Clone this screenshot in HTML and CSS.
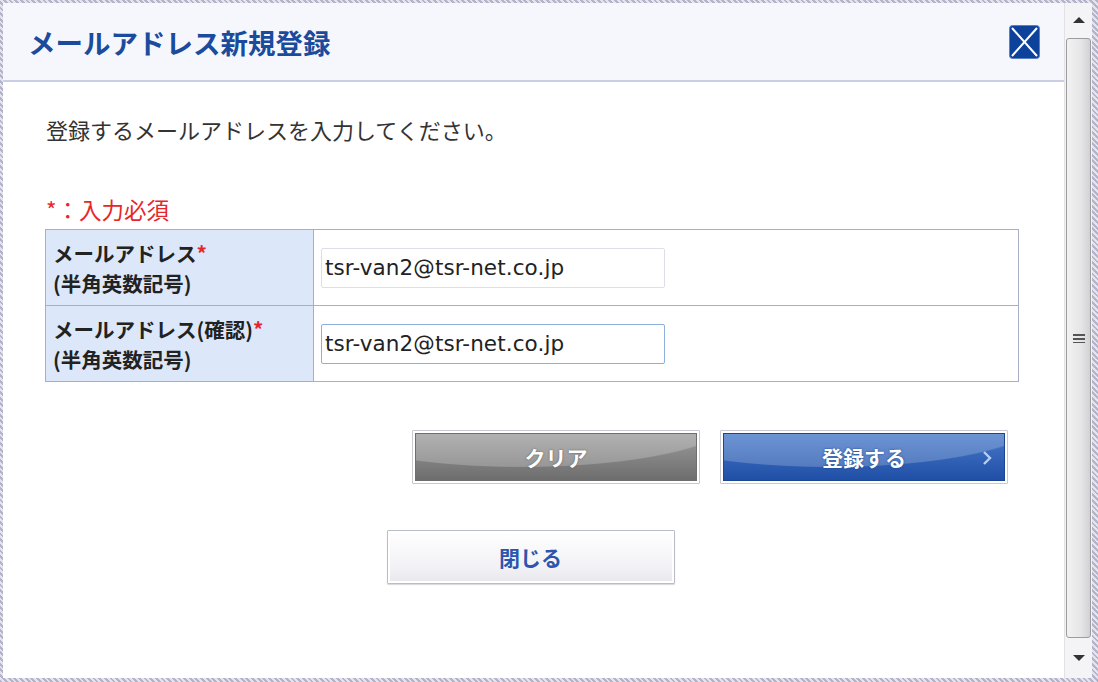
FILE: index.html
```html
<!DOCTYPE html>
<html>
<head>
    <title>メールアドレス新規登録</title>
    <link rel="stylesheet" href="styles.css">
</head>
<body>
    <div class="frame">
        <div class="window">
            <div class="main">
                <div class="header">
                    <h1 class="title">メールアドレス新規登録</h1>
                    <a class="close-x" href="#">
                        <svg width="31" height="34" viewBox="0 0 31 34">
                            <rect x="0.5" y="0.5" width="30" height="33" rx="3" fill="#0d429c" stroke="#5b7fc4"/>
                            <line x1="3" y1="3" x2="28" y2="31" stroke="#ffffff" stroke-width="2"/>
                            <line x1="28" y1="3" x2="3" y2="31" stroke="#ffffff" stroke-width="2"/>
                        </svg>
                    </a>
                </div>

                <div class="content">
                    <p class="intro">登録するメールアドレスを入力してください。</p>
                    <p class="required-note">*：入力必須</p>

                    <table class="form-table">
                        <tr>
                            <th>メールアドレス<span class="req">*</span><br/>(半角英数記号)</th>
                            <td><input type="text" class="field" value="tsr-van2@tsr-net.co.jp"></td>
                        </tr>
                        <tr>
                            <th>メールアドレス(確認)<span class="req">*</span><br/>(半角英数記号)</th>
                            <td><input type="text" class="field field-focus" value="tsr-van2@tsr-net.co.jp"></td>
                        </tr>
                    </table>

                    <div class="actions">
                        <button type="button" class="btn btn-gray">クリア</button>
                        <button type="button" class="btn btn-blue">登録する
                            <svg class="chev" width="9" height="14" viewBox="0 0 9 14">
                                <path d="M1 1 L7 7 L1 13" fill="none" stroke="#b8cdf0" stroke-width="2.4"/>
                            </svg>
                        </button>
                    </div>

                    <div class="close-row">
                        <button type="button" class="btn btn-white">閉じる</button>
                    </div>
                </div>
            </div>

            <div class="scrollbar">
                <div class="arrow arrow-up"></div>
                <div class="thumb"><span class="grip"></span></div>
                <div class="arrow arrow-down"></div>
            </div>
        </div>
    </div>
</body>
</html>
```

FILE: styles.css
```css
body {
    margin: 0;
    font-family: "Noto Sans CJK JP", "Noto Sans", sans-serif;
    color: #333;
}

.frame {
    width: 1098px;
    height: 682px;
    box-sizing: border-box;
    padding: 3px 6px 4px 3px;
    background: repeating-linear-gradient(45deg, #b3b3c9 0 2px, #e4e4ee 2px 4px);
}

.window {
    display: flex;
    height: 100%;
    background: #fff;
}

.main {
    flex: 1;
    display: flex;
    flex-direction: column;
}

/* header */
.header {
    height: 77px;
    display: flex;
    align-items: center;
    justify-content: space-between;
    padding: 0 24px 0 25px;
    background: #f6f7fc;
    border-bottom: 2px solid #c9cde6;
}

.title {
    margin: 0;
    font-size: 27.5px;
    font-weight: bold;
    color: #1a4b9c;
    letter-spacing: 0;
}

.close-x {
    display: block;
    height: 34px;
}

/* body */
.content {
    padding: 0 0 0 42px;
}

.intro {
    margin: 33px 0 0 1px;
    font-size: 22px;
    line-height: 28px;
    color: #333;
}

.required-note {
    margin: 52px 0 0 1px;
    font-size: 22.5px;
    line-height: 28px;
    color: #e8262a;
}

.form-table {
    width: 974px;
    margin-top: 6px;
    border-collapse: collapse;
    border: 1px solid #a7aec5;
}

.form-table th,
.form-table td {
    border: 1px solid #a7aec5;
    height: 75px;
    padding: 0;
    vertical-align: middle;
}

.form-table th {
    width: 260px;
    padding-left: 7px;
    text-align: left;
    background: #dce8fa;
    font-size: 20.5px;
    line-height: 30px;
    font-weight: bold;
    color: #222;
}

.req {
    color: #e8262a;
}

.form-table td {
    padding-left: 7px;
}

.field {
    width: 344px;
    height: 40px;
    box-sizing: border-box;
    padding: 0 3px;
    border: 1px solid #dcdfe8;
    border-radius: 2px;
    font-family: "DejaVu Sans", sans-serif;
    font-size: 21.5px;
    letter-spacing: 0.1px;
    color: #222;
    outline: none;
}

.field-focus {
    border-color: #8eaedb;
}

/* buttons */
.actions {
    display: flex;
    justify-content: flex-end;
    gap: 20px;
    width: 963px;
    margin-top: 48px;
}

.close-row {
    display: flex;
    justify-content: center;
    margin: 46px 6px 0 0;
    padding-right: 42px;
}

.btn {
    position: relative;
    width: 288px;
    height: 54px;
    border: 1px solid #c9c9d2;
    border-radius: 1px;
    font-family: "Noto Sans CJK JP", sans-serif;
    font-size: 21px;
    font-weight: bold;
    cursor: pointer;
}

.btn-gray {
    color: #fff;
    text-shadow: 0 0 2px #555;
    background:
        radial-gradient(ellipse 75% 95% at 38% -25%, rgba(255, 255, 255, 0.22) 98%, rgba(255, 255, 255, 0) 100%),
        linear-gradient(#9e9e9e, #6a6a6a);
    box-shadow: inset 0 0 0 2px #fff, inset 0 0 0 3px #6e6e6e;
}

.btn-blue {
    color: #fff;
    text-shadow: 0 0 2px #123a80;
    background:
        radial-gradient(ellipse 75% 95% at 38% -25%, rgba(255, 255, 255, 0.2) 98%, rgba(255, 255, 255, 0) 100%),
        linear-gradient(#4a7ccb, #1d4ca4);
    box-shadow: inset 0 0 0 2px #fff, inset 0 0 0 3px #1c4695;
}

.chev {
    position: absolute;
    right: 15px;
    top: 20px;
}

.btn-white {
    color: #2d55ad;
    border-color: #b8bccb;
    background: linear-gradient(#ffffff, #f2f2f6 70%, #e6e6ec);
    box-shadow: inset 0 0 0 2px #fff, 0 1px 1px #d8d8e0;
}

/* scrollbar */
.scrollbar {
    width: 27px;
    display: flex;
    flex-direction: column;
    background: #f4f4f6;
    border-left: 1px solid #e2e2e6;
}

.arrow {
    display: flex;
    align-items: center;
    justify-content: center;
}

.arrow-up {
    height: 35px;
}

.arrow-down {
    flex: 1;
}

.arrow-up::before,
.arrow-down::before {
    content: "";
    border-left: 6px solid transparent;
    border-right: 6px solid transparent;
}

.arrow-up::before {
    border-bottom: 6px solid #333;
    margin-bottom: 2px;
}

.arrow-down::before {
    border-top: 6px solid #333;
}

.thumb {
    height: 598px;
    margin: 0 1px;
    border: 1px solid #9c9c9c;
    border-radius: 3px;
    background: linear-gradient(to right, #f2f2f2, #e6e6e8 60%, #d2d2d6);
    display: flex;
    align-items: center;
    justify-content: center;
}

.grip {
    width: 12px;
    height: 9px;
    background: repeating-linear-gradient(#555 0 2px, transparent 2px 4px);
}
```
